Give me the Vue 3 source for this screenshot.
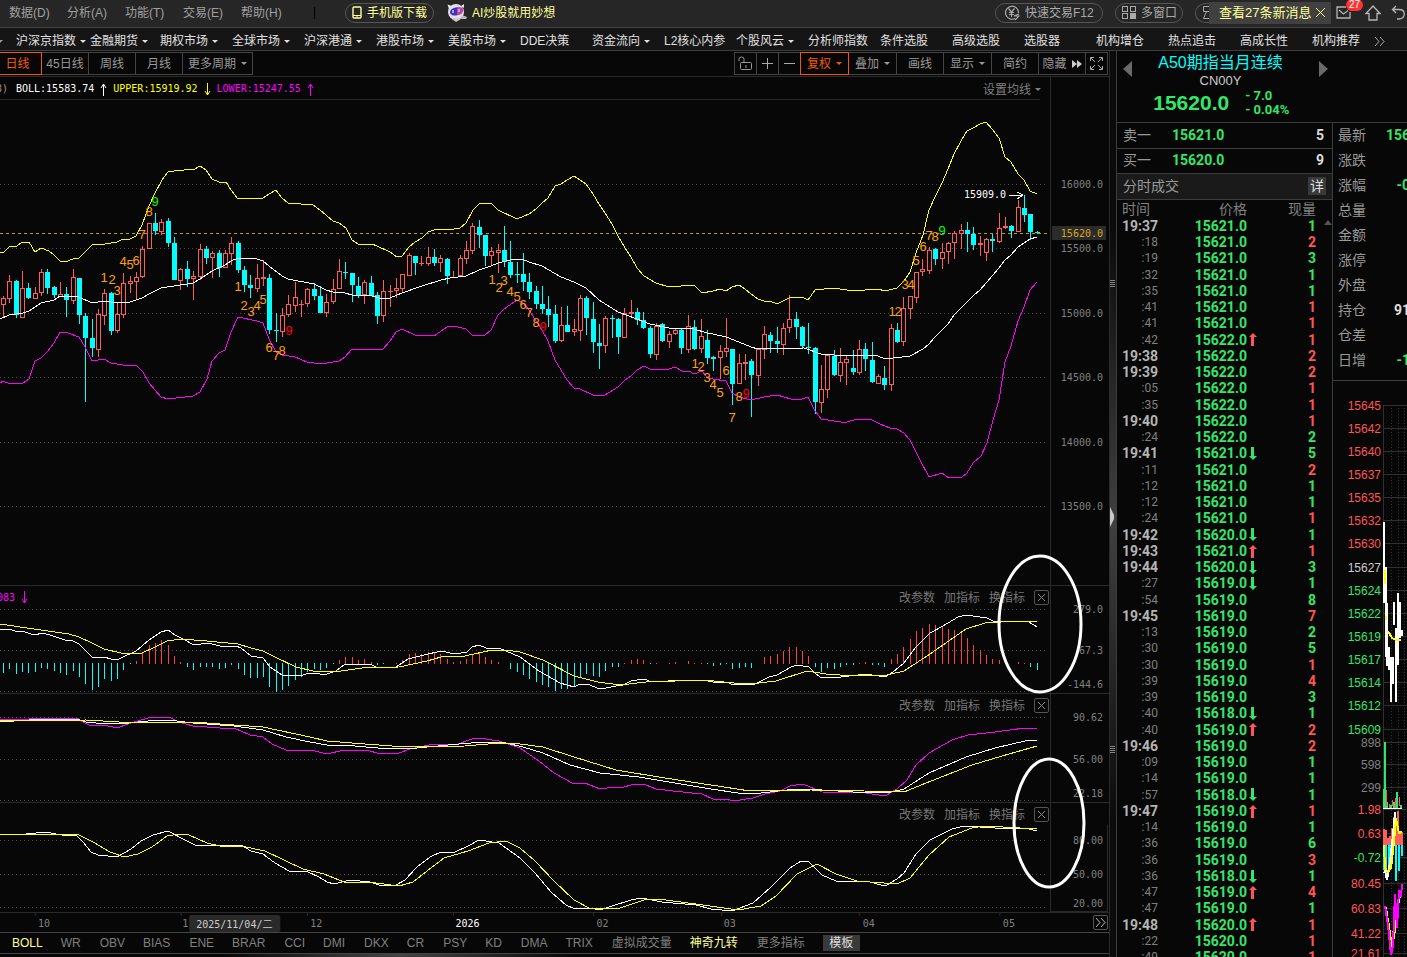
<template>
  <div class="app">
    <header class="menubar">
      <nav class="menus">
        <button v-for="m in menus" :key="m" type="button">{{ m }}</button>
      </nav>
      <span class="menu-sep"></span>
      <button type="button" class="pill pill-phone">
        <svg width="10" height="13" viewBox="0 0 10 13" fill="none" stroke="#ffff99">
          <rect x="1" y="1" width="8" height="11" rx="1" stroke-width="1.4" />
          <path d="M1 9.5h8" /><path d="M4 11h2" />
        </svg>
        手机版下载
      </button>
      <button type="button" class="ai">
        <svg width="22" height="20" viewBox="0 0 22 20">
          <path d="M3 6L1.500 1.500 6 3zM15 3l3-2v4z" fill="#e8e4f4" />
          <circle cx="10" cy="9" r="8" fill="#e4dfee" />
          <ellipse cx="10.500" cy="8.500" rx="6.500" ry="4" fill="#4630b4" transform="rotate(-12 10 9)" />
          <path d="M11 5c4-2 7 0 6 3s-3 4-6 4z" fill="#c0409c" />
          <path d="M7 7v3M13 6v3" stroke="#9fd0ff" stroke-width="1.500" />
          <path d="M6 16l4 3 5-3-1-1H7z" fill="#cfc9c2" />
          <path d="M16 12l5 2-1 2-5 0z" fill="#bdb9c4" />
        </svg>
        AI炒股就用妙想
      </button>
      <span class="grow"></span>
      <button type="button" class="pill pill-trade">
        <svg width="16" height="16" viewBox="0 0 16 16" fill="none" stroke="#aaa" stroke-width="1.200">
          <path d="M11 13.500A6.500 6.500 0 1 1 14.500 8" />
          <path d="M4.500 3.500L7.500 7l3-3.500M7.500 7v5M5 7.500h5M5 9.500h5" />
          <path d="M15 9l-5 2h5l-4 4" />
        </svg>
        快速交易F12
      </button>
      <button type="button" class="pill pill-win">
        <svg width="14" height="13" viewBox="0 0 14 13" fill="none" stroke="#aaa">
          <rect x=".5" y=".5" width="5" height="5" /><rect x="8.500" y=".5" width="5" height="5" />
          <rect x=".5" y="7.500" width="5" height="5" /><rect x="8.500" y="7.500" width="5" height="5" fill="#aaa" />
        </svg>
        多窗口
      </button>
      <button type="button" class="pill pill-cut" aria-label="layout">
        <svg width="7" height="13" viewBox="0 0 7 13" fill="none" stroke="#aaa">
          <path d="M7 .5H1.500v5H7M4.500 5.500L1.500 12.500H7" />
        </svg>
      </button>
      <div class="notice">
        <span>查看27条新消息</span>
        <button type="button" aria-label="close">
          <svg width="11" height="11" viewBox="0 0 11 11" stroke="#ffff99" fill="none"><path d="M1 1l9 9M10 1l-9 9" /></svg>
        </button>
      </div>
      <button type="button" class="tool mail" aria-label="mail">
        <svg width="15" height="13" viewBox="0 0 15 13" fill="none" stroke="#b4b4b4" stroke-width="1.300">
          <path d="M10 1H1v11h13V6" /><path d="M3 4l4.500 4L12 4.500" />
        </svg>
        <span class="badge">27</span>
      </button>
      <button type="button" class="tool" aria-label="home">
        <svg width="16" height="16" viewBox="0 0 16 16" fill="none" stroke="#b4b4b4" stroke-width="1.300">
          <path d="M1 8.500L8 1l7 7.500h-3V15H4V8.500z" />
        </svg>
      </button>
      <button type="button" class="tool undo" aria-label="back">
        <svg width="14" height="15" viewBox="0 0 14 15" fill="none" stroke="#b4b4b4" stroke-width="1.300">
          <path d="M5 1L1.500 4.500 5 8M1.500 4.500H8c7 0 7 8.500 0 9.500H6" />
        </svg>
      </button>
    </header>

    <nav class="navbar">
      <i class="caret"></i>
      <a v-for="n in navs" :key="n.t" href="#">{{ n.t }}<i v-if="n.d" class="caret"></i></a>
      <svg width="12" height="9" viewBox="0 0 12 9" fill="none" stroke="#aaa"><path d="M1 0l4 4.500L1 9M6 0l4 4.500L6 9" /></svg>
    </nav>

    <main class="work">
      <section class="charts">
        <div class="toolbar">
          <button type="button" class="on p41">日线</button>
          <button type="button" class="p48">45日线</button>
          <button type="button" class="p48">周线</button>
          <button type="button" class="p48">月线</button>
          <button type="button" class="p71">更多周期<i class="caret"></i></button>
          <span class="grow"></span>
          <button type="button" class="p23" aria-label="lock">
            <svg width="15" height="15" viewBox="0 0 15 15" fill="none" stroke="#999">
              <path d="M1 5V3q0-2 2.500-2T6 3v3" /><rect x="2.500" y="6.500" width="11" height="7" rx="1" /><path d="M8 9v3" />
            </svg>
          </button>
          <button type="button" class="p23" aria-label="zoom in">
            <svg width="11" height="11" viewBox="0 0 11 11" stroke="#aaa"><path d="M0 5.500h11M5.500 0v11" /></svg>
          </button>
          <button type="button" class="p23" aria-label="zoom out">
            <svg width="11" height="11" viewBox="0 0 11 11" stroke="#aaa"><path d="M0 5.500h11" /></svg>
          </button>
          <button type="button" class="on p49">复权<i class="caret"></i></button>
          <button type="button" class="p49">叠加<i class="caret"></i></button>
          <button type="button" class="p48">画线</button>
          <button type="button" class="p49">显示<i class="caret"></i></button>
          <button type="button" class="p48">简约</button>
          <button type="button" class="p48">隐藏
            <svg width="10" height="8" viewBox="0 0 10 8" fill="#ccc"><path d="M0 0l5 4-5 4zM5 0l5 4-5 4z" /></svg>
          </button>
          <button type="button" class="p23" aria-label="fullscreen">
            <svg width="13" height="13" viewBox="0 0 13 13" fill="none" stroke="#aaa">
              <path d="M.5 4V.5H4M9 .5h3.500V4M12.500 9v3.500H9M4 12.500H.5V9M1 1l4 4M12 1L8 5M12 12L8 8M1 12l4-4" />
            </svg>
          </button>
        </div>

        <div class="legend">
          <span class="dim">3)</span>
          <span class="w">BOLL:15583.74</span><svg class="arr" viewBox="0 0 7 13"><path d="M3.500 13V1M1 5l2.500-4L6 5" stroke="#fff" /></svg>
          <span class="y">UPPER:15919.92</span><svg class="arr" viewBox="0 0 7 13"><path d="M3.500 0v12M1 8l2.500 4L6 8" stroke="#ff0" /></svg>
          <span class="m">LOWER:15247.55</span><svg class="arr" viewBox="0 0 7 13"><path d="M3.500 13V1M1 5l2.500-4L6 5" stroke="#f0f" /></svg>
          <span class="grow"></span>
          <button type="button">设置均线<i class="caret"></i></button>
          <span class="legend-end"></span>
        </div>

        <svg class="plot" viewBox="0 99 1109 486">
          <path class="frame" d="M0 99H1040M1050 99V585" />
          <path v-for="t in priceTicks" :key="t.y" class="grid" :d="`M0 ${t.y}H1048`" />
          <path class="last" d="M0 233H1048" />
          <g v-for="(c, i) in candles" :key="i" :fill="c[0] ? '#ff5c5c' : '#00ffff'">
            <rect :x="cx(i)" :y="c[1]" width="1" :height="Math.max(1, c[4] - c[1])" />
            <rect :x="cx(i) - 2" :y="c[2]" width="5" :height="Math.max(1, c[3] - c[2])" />
            <rect v-if="c[0] && c[3] - c[2] > 2" :x="cx(i) - 1" :y="c[2] + 1" width="3" :height="c[3] - c[2] - 2" fill="#070707" />
          </g>
          <polyline class="line y" :points="boll.upper" />
          <polyline class="line w" :points="boll.mid" />
          <polyline class="line m" :points="boll.lower" />
          <text v-for="(n, i) in nines" :key="'n' + i" class="nine" :class="n[3]" :x="n[1]" :y="n[2] + 5">{{ n[0] }}</text>
          <text class="peak" x="964" y="198">15909.0</text>
          <path class="peak-arrow" d="M1009 195H1023M1017 192L1023 195L1017 199" />
          <rect x="1052" y="226" width="54" height="14" fill="#2b2b2b" />
          <text v-for="t in priceTicks" :key="t.v" class="axis" x="1103" :y="t.y + 4">{{ t.v }}</text>
          <text class="axis now" x="1103" y="237">15620.0</text>
        </svg>

        <div v-for="p in panels" :key="p.id" class="panel">
          <div class="panel-head">
            <span v-if="p.note" class="note">{{ p.note }}<svg class="arr" viewBox="0 0 7 13"><path d="M3.500 0v12M1 8l2.500 4L6 8" stroke="#f0f" /></svg></span>
            <span class="grow"></span>
            <button type="button">改参数</button>
            <button type="button">加指标</button>
            <button type="button">换指标</button>
            <button type="button" class="box" aria-label="close">
              <svg width="9" height="9" viewBox="0 0 9 9" stroke="#888"><path d="M1 1l7 7M8 1L1 8" /></svg>
            </button>
          </div>
          <svg class="plot" :viewBox="p.box">
            <path class="frame" :d="p.frame" />
            <path v-for="g in p.grid" :key="g" class="grid" :d="`M0 ${g}H1048`" />
            <template v-if="p.bars">
              <rect v-for="(b, i) in p.bars" :key="i" :x="cx(i)" :y="b > 0 ? 664 - b : 663" width="1" :height="Math.abs(b)" :fill="b > 0 ? '#ff4040' : '#00ffff'" />
            </template>
            <polyline v-for="l in p.lines" :key="l[0]" class="line" :class="l[0]" :points="l[1]" />
            <text v-for="t in p.ticks" :key="t[0]" class="axis" x="1103" :y="t[1] + 4">{{ t[0] }}</text>
          </svg>
        </div>

        <div class="dates">
          <svg viewBox="0 913 1092 19">
            <path v-for="x in [35, 181, 307, 453, 593, 721, 859, 999]" :key="x" class="frame" :d="`M${x} 913v3`" />
            <text v-for="d in dates" :key="d[0] + d[1]" :class="{ year: d[0] === '2026' }" :x="d[1]" y="927">{{ d[0] }}</text>
            <rect x="189" y="915" width="91" height="17" rx="2" fill="#2a2a2a" />
            <text class="cursor-date" x="196" y="928">2025/11/04/二</text>
          </svg>
          <button type="button" class="box" aria-label="more">
            <svg width="11" height="11" viewBox="0 0 11 11" fill="none" stroke="#bbb"><path d="M1 1l4 4.500L1 10M6 1l4 4.500L6 10" /></svg>
          </button>
        </div>

        <div class="tabs">
          <button v-for="t in tabs" :key="t" type="button" :class="{ hot: t === 'BOLL' || t === '神奇九转', tpl: t === '模板' }">{{ t }}</button>
        </div>
        <div class="foot"></div>

        <svg class="marks" viewBox="0 51 1109 906">
          <ellipse cx="1040" cy="624" rx="41" ry="68" />
          <ellipse cx="1049" cy="823" rx="35" ry="64" />
        </svg>
      </section>

      <div class="splitter">
        <i class="grip"></i>
        <svg width="5" height="20" viewBox="0 0 5 20" fill="#c8c8c8"><path d="M0 0l4 8v4l-4 8z" /></svg>
        <i class="grip"></i>
      </div>

      <aside class="quote">
        <div class="head">
          <button type="button" aria-label="previous"><svg width="9" height="16" viewBox="0 0 9 16" fill="#6a6a6a"><path d="M9 0v16L0 8z" /></svg></button>
          <div class="head-mid">
            <h1>A50期指当月连续</h1>
            <p class="code">CN00Y</p>
            <div class="price">
              <strong>15620.0</strong>
              <span>- 7.0<br />- 0.04%</span>
            </div>
          </div>
          <button type="button" aria-label="next"><svg width="9" height="16" viewBox="0 0 9 16" fill="#6a6a6a"><path d="M0 0v16l9-8z" /></svg></button>
        </div>
        <div class="cols">
          <div class="ticks">
            <div class="book"><span>卖一</span><b class="g">15621.0</b><b class="vol">5</b></div>
            <div class="book"><span>买一</span><b class="g">15620.0</b><b class="vol">9</b></div>
            <div class="ticks-title"><span>分时成交</span><button type="button">详</button></div>
            <table>
              <thead>
                <tr><th>时间</th><th>价格</th><th></th><th>现量</th></tr>
              </thead>
              <tbody>
                <tr v-for="(r, i) in trades" :key="i">
                  <td :class="r[0][0] === ':' ? 'sec' : 'min'">{{ r[0] }}</td>
                  <td class="g">{{ r[1] }}.0</td>
                  <td class="dir">
                    <svg v-if="r[2]" width="8" height="13" viewBox="0 0 8 13" :fill="r[2] === 'u' ? '#ff5555' : '#33e668'">
                      <path :d="r[2] === 'u' ? 'M4 0L8 4H5V13H2V4H0z' : 'M4 13L8 9H5V0H2V9H0z'" />
                    </svg>
                  </td>
                  <td :class="r[4]">{{ r[3] }}</td>
                </tr>
              </tbody>
            </table>
            <i class="scroll-up"></i>
          </div>
          <div class="info">
            <dl>
              <div v-for="f in facts" :key="f[0]"><dt>{{ f[0] }}</dt><dd :class="f[2]">{{ f[1] }}</dd></div>
            </dl>
            <svg class="mini" viewBox="1333 381 74 576">
              <path class="mini-grid" :d="miniGrid" />
              <path class="mini-dots" d="M1391 405V957M1398 405V957M1404 405V957" />
              <path class="mini-w" d="M1384 522V603M1386 567V657M1387 603V666M1389 647V670M1391 657V702M1393 657V684M1394 602V625M1396 628V702M1398 593V665M1400 602V638M1402 630V636" />
              <path class="mini-y" d="M1385 570V584M1386 616V620M1388 631L1392 638L1396 640H1401" />
              <path class="mini-g" d="M1384 789V808M1385 742V808M1387 802V808M1391 805V808M1394 802V808M1397 792V808M1401 805V808" />
              <path class="mini-r" d="M1386 790V806M1389 804V808M1392 800V806M1395 798V808M1399 797V806" />
              <path class="mini-base" d="M1383 808H1402" />
              <path class="mini-bar-r" d="M1384 829V845M1386 830V845M1388 838V845M1390 836V845M1392 828V845M1394 817V845M1396 823V845M1398 811V845M1400 832V845M1402 832V845" />
              <path class="mini-bar-c" d="M1384 845V870M1386 845V873M1389 845V865M1391 845V858M1396 845V881M1399 845V871M1402 845V856" />
              <polyline class="mini-w" points="1384,873 1385,871 1387,880 1390,862 1393,835 1395,812" />
              <polyline class="mini-y" points="1384,845 1385,868 1388,872 1391,868 1394,842 1396,818 1399,833 1402,832" />
              <polyline class="mini-w" points="1386,907 1389,930 1392,950 1395,912 1398,905 1401,890" />
              <polyline class="mini-y" points="1386,910 1389,926 1392,948 1395,930 1398,900 1401,894" />
              <polyline class="mini-m" points="1385,906 1388,925 1391,955 1393,945 1395,894 1397,928 1399,890 1401,897 1402,884" />
              <text v-for="t in miniTicks" :key="t[0]" :class="t[2]" x="1381" :y="t[1] + 5">{{ t[0] }}</text>
            </svg>
          </div>
        </div>
      </aside>
    </main>
  </div>
</template>

<script setup>
const menus = ['数据(D)', '分析(A)', '功能(T)', '交易(E)', '帮助(H)']

const navs = [
  { t: '沪深京指数', d: 1 }, { t: '金融期货', d: 1 }, { t: '期权市场', d: 1 }, { t: '全球市场', d: 1 },
  { t: '沪深港通', d: 1 }, { t: '港股市场', d: 1 }, { t: '美股市场', d: 1 }, { t: 'DDE决策' },
  { t: '资金流向', d: 1 }, { t: 'L2核心内参' }, { t: '个股风云', d: 1 }, { t: '分析师指数' },
  { t: '条件选股' }, { t: '高级选股' }, { t: '选股器' }, { t: '机构增仓' },
  { t: '热点追击' }, { t: '高成长性' }, { t: '机构推荐' }
]

const tabs = ['BOLL', 'WR', 'OBV', 'BIAS', 'ENE', 'BRAR', 'CCI', 'DMI', 'DKX', 'CR', 'PSY', 'KD', 'DMA', 'TRIX', '虚拟成交量', '神奇九转', '更多指标', '模板']

const dates = [['10', 38], ['1', 182], ['12', 310], ['2026', 455], ['02', 596], ['03', 723], ['04', 862], ['05', 1002]]

const priceTicks = [
  { v: '16000.0', y: 184 }, { v: '15500.0', y: 248 }, { v: '15000.0', y: 313 },
  { v: '14500.0', y: 377 }, { v: '14000.0', y: 442 }, { v: '13500.0', y: 506 }
]

// centre column of candle i
const cx = (i) => Math.floor(3.4 + 6.342 * i)

// up?, high, body top, body bottom, low
const candles = [
  [1, 296, 298, 305, 318], [1, 275, 281, 299, 303], [0, 280, 281, 315, 318], [1, 271, 288, 318, 318], [0, 283, 288, 298, 299],
  [1, 287, 293, 299, 299], [1, 269, 272, 293, 296], [0, 269, 272, 288, 294], [0, 286, 287, 295, 298], [1, 282, 294, 297, 297],
  [0, 287, 294, 300, 317], [1, 269, 277, 301, 304], [0, 278, 278, 315, 324], [0, 313, 316, 338, 402], [0, 319, 338, 348, 357],
  [1, 309, 314, 350, 357], [1, 289, 293, 316, 325], [0, 292, 293, 331, 335], [1, 303, 314, 331, 333], [1, 273, 283, 315, 318],
  [1, 276, 281, 284, 293], [1, 272, 277, 282, 299], [1, 246, 249, 277, 278], [1, 223, 223, 249, 249], [0, 213, 223, 231, 235],
  [1, 219, 222, 232, 235], [0, 218, 221, 243, 247], [0, 237, 243, 280, 280], [1, 268, 269, 281, 290], [0, 261, 269, 279, 287],
  [1, 271, 276, 279, 300], [1, 244, 249, 277, 280], [0, 246, 249, 258, 264], [1, 251, 253, 258, 278], [0, 250, 253, 268, 277],
  [1, 250, 253, 268, 268], [1, 237, 243, 254, 265], [0, 241, 243, 270, 273], [0, 266, 270, 285, 292], [0, 275, 285, 288, 298],
  [1, 264, 278, 289, 292], [1, 260, 277, 279, 286], [0, 274, 278, 330, 334], [0, 313, 330, 331, 342], [1, 308, 315, 332, 337],
  [1, 295, 304, 315, 317], [1, 282, 297, 306, 312], [1, 300, 304, 305, 317], [1, 288, 289, 304, 307], [0, 283, 289, 296, 300],
  [0, 286, 296, 313, 313], [1, 294, 302, 313, 317], [1, 279, 289, 302, 304], [1, 259, 271, 289, 289], [0, 262, 272, 273, 279],
  [0, 273, 273, 285, 302], [0, 277, 286, 295, 298], [1, 280, 282, 295, 304], [0, 276, 283, 296, 296], [0, 292, 295, 316, 324],
  [1, 280, 291, 316, 322], [1, 285, 291, 292, 307], [1, 278, 288, 291, 298], [1, 274, 274, 289, 292], [1, 253, 255, 276, 276],
  [0, 256, 256, 263, 275], [1, 256, 263, 264, 266], [1, 247, 257, 264, 266], [0, 249, 257, 263, 266], [1, 255, 258, 263, 272],
  [0, 258, 259, 276, 284], [1, 271, 277, 278, 278], [1, 255, 258, 276, 277], [1, 241, 250, 259, 264], [1, 223, 226, 251, 254],
  [0, 220, 227, 235, 248], [0, 235, 235, 256, 266], [1, 247, 251, 256, 266], [1, 244, 250, 253, 273], [0, 226, 250, 262, 267],
  [0, 241, 262, 275, 278], [0, 262, 274, 275, 283], [0, 253, 274, 282, 291], [0, 273, 282, 292, 299], [0, 286, 291, 304, 309],
  [0, 286, 304, 309, 314], [0, 296, 309, 315, 327], [0, 305, 314, 341, 343], [1, 307, 325, 341, 342], [0, 306, 325, 332, 332],
  [1, 319, 329, 332, 336], [1, 295, 298, 331, 341], [0, 296, 298, 318, 335], [0, 302, 319, 342, 353], [0, 324, 343, 346, 369],
  [1, 316, 318, 346, 353], [0, 315, 318, 319, 338], [0, 318, 319, 337, 354], [1, 308, 313, 338, 338], [1, 300, 312, 314, 317],
  [0, 308, 312, 320, 325], [0, 312, 320, 328, 329], [0, 326, 328, 354, 358], [1, 323, 326, 355, 360], [0, 323, 324, 341, 342],
  [1, 331, 334, 342, 348], [1, 328, 330, 334, 335], [0, 329, 330, 348, 354], [1, 315, 326, 350, 353], [0, 320, 327, 349, 350],
  [1, 319, 336, 349, 353], [0, 330, 340, 358, 364], [0, 356, 357, 359, 371], [1, 345, 351, 358, 379], [1, 318, 348, 352, 357],
  [0, 349, 349, 384, 405], [1, 354, 363, 384, 384], [1, 354, 362, 364, 380], [0, 359, 361, 375, 417], [1, 349, 349, 376, 386],
  [1, 326, 334, 350, 359], [0, 332, 335, 341, 353], [0, 327, 341, 344, 353], [1, 323, 328, 345, 355], [1, 295, 319, 328, 333],
  [0, 312, 319, 327, 339], [0, 326, 327, 346, 348], [0, 323, 347, 348, 354], [0, 347, 348, 402, 414], [1, 365, 389, 403, 413],
  [1, 355, 355, 390, 398], [0, 350, 356, 375, 376], [1, 348, 362, 376, 382], [1, 356, 359, 363, 385], [0, 350, 368, 372, 375],
  [1, 340, 349, 373, 375], [0, 343, 349, 359, 371], [0, 342, 360, 382, 383], [1, 374, 376, 384, 384], [0, 366, 378, 385, 390],
  [1, 324, 328, 385, 391], [0, 323, 330, 342, 343], [1, 297, 308, 342, 346], [1, 296, 296, 309, 319], [1, 272, 272, 298, 303],
  [1, 259, 269, 272, 276], [1, 247, 250, 271, 274], [0, 248, 249, 259, 265], [1, 243, 252, 259, 269], [1, 242, 243, 252, 264],
  [1, 231, 233, 243, 259], [1, 224, 230, 234, 249], [0, 222, 230, 234, 252], [0, 227, 234, 245, 250], [1, 236, 243, 245, 256],
  [1, 238, 239, 253, 261], [0, 234, 239, 241, 252], [1, 213, 228, 242, 243], [1, 217, 226, 228, 229], [0, 225, 226, 231, 238],
  [1, 200, 207, 232, 232], [0, 195, 208, 215, 222], [0, 214, 214, 232, 240], [0, 231, 232, 233, 234]
]

const boll = {
  upper: '0,253 4,252 9,247 17,246 22,242 29,242 35,252 41,248 49,251 54,255 60,261 65,262 73,259 79,258 92,245 105,244 111,243 117,242 123,239 130,239 136,236 142,225 149,206 155,193 162,180 168,172 174,171 195,169 200,166 206,170 212,179 219,182 226,182 231,190 238,199 263,198 269,194 276,190 282,198 288,203 313,205 320,210 333,221 339,223 346,228 352,240 358,244 372,244 377,246 390,252 397,257 402,256 409,247 415,242 422,238 428,232 434,230 441,229 447,230 454,229 460,228 466,223 473,210 479,204 485,203 491,203 498,210 517,219 529,214 536,209 542,203 548,198 555,186 561,184 567,180 574,176 580,180 586,184 593,194 599,204 605,213 612,224 618,236 625,248 631,257 637,268 644,276 656,283 669,287 694,285 702,293 713,291 720,289 726,291 732,287 739,285 745,289 751,294 758,299 764,301 770,301 777,304 789,298 802,297 808,300 815,290 834,288 853,291 878,289 885,291 897,288 904,281 910,272 916,253 923,235 929,210 935,197 942,183 948,169 954,154 961,141 967,131 973,128 980,124 986,122 992,129 999,138 1005,157 1011,162 1018,174 1024,180 1030,191 1037,194',
  mid: '0,319 9,315 23,313 29,311 35,307 41,303 54,300 60,296 79,297 92,303 105,301 117,303 130,302 142,298 149,294 161,288 174,286 193,283 200,279 212,271 225,265 231,261 238,258 257,259 263,261 269,266 282,276 288,279 314,284 326,290 333,292 345,293 352,295 372,296 383,299 390,298 402,293 422,286 441,280 450,278 466,276 479,270 491,266 498,263 510,260 522,259 529,262 542,266 561,277 574,282 586,288 599,300 618,312 637,319 650,324 669,328 694,329 707,333 713,334 726,337 739,342 751,347 758,349 804,348 821,354 847,356 867,355 878,356 885,359 910,356 923,349 929,344 935,337 948,324 954,315 973,296 980,290 999,268 1005,260 1011,255 1018,247 1030,239 1037,237',
  lower: '0,383 3,381 10,384 23,383 29,379 35,361 41,358 48,351 54,343 60,332 68,333 79,337 85,347 92,361 104,359 111,363 123,365 136,365 143,372 149,383 161,397 168,399 193,396 200,392 207,379 212,361 219,353 225,350 231,332 238,317 257,321 263,323 269,339 276,352 282,355 295,357 307,362 321,364 339,361 345,357 352,349 372,349 377,350 383,349 390,341 396,332 402,329 415,335 434,336 447,327 454,326 466,329 472,335 485,335 491,330 498,315 504,309 517,300 523,303 529,310 542,330 548,341 555,360 567,380 574,388 580,389 593,395 599,396 605,395 618,387 625,380 631,376 637,370 644,366 650,369 669,369 675,367 682,371 689,371 694,374 702,371 707,377 713,379 726,381 732,393 739,397 751,400 764,397 777,395 791,399 802,399 808,397 815,411 821,419 841,422 847,422 857,419 872,420 880,424 890,428 897,429 904,433 910,440 920,460 929,477 942,473 949,478 962,477 967,473 973,463 981,456 987,443 993,420 999,400 1005,362 1011,346 1018,321 1024,307 1030,290 1037,282'
}

// nine-turn counters: digit, x, y, colour
const nines = [
  ['1', 104, 277], ['2', 112, 279], ['3', 117, 290], ['4', 123, 261], ['5', 130, 264], ['6', 136, 260], ['7', 142, 234], ['8', 149, 211], ['9', 155, 201, 'up'],
  ['1', 238, 286], ['2', 244, 305], ['3', 251, 311], ['4', 257, 305], ['5', 263, 299], ['6', 269, 347], ['7', 276, 355], ['8', 282, 350], ['9', 289, 330, 'down'],
  ['1', 492, 279], ['2', 499, 287], ['3', 504, 280], ['4', 510, 291], ['5', 517, 296], ['6', 523, 304], ['7', 529, 312], ['8', 536, 322], ['9', 543, 326, 'down'],
  ['1', 695, 363], ['2', 701, 366], ['3', 707, 377], ['4', 713, 384], ['5', 720, 392], ['6', 726, 370], ['7', 732, 417], ['8', 739, 396], ['9', 746, 393, 'down'],
  ['1', 892, 311], ['2', 898, 311], ['3', 905, 284], ['4', 911, 284], ['5', 916, 260], ['6', 923, 246], ['7', 929, 235], ['8', 935, 236], ['9', 942, 230, 'up']
]

const macd = [
  -10, -6, -11, -9, -10, -9, -5, -6, -8, -10, -12, -8, -14, -21, -27, -24, -16, -18, -16, -7, -1, 3, 11, 19, 21, 24, 19, 8, 2, -4,
  -7, -4, -4, -4, -6, -5, -2, -6, -12, -15, -15, -14, -24, -29, -27, -23, -17, -14, -9, -6, -7, -5, -1, 4, 7, 7, 4, 5, 2, -2,
  -1, 0, 1, 4, 10, 11, 10, 12, 11, 10, 5, 2, 3, 5, 10, 11, 7, 4, 2, 0, -6, -9, -12, -16, -19, -22, -24, -28, -26, -26,
  -23, -15, -11, -13, -14, -8, -4, -4, 1, 4, 5, 4, -1, 1, 0, 1, 2, 0, 3, 1, 1, -1, -3, -2, -1, -6, -5, -4, -5, 0,
  7, 8, 10, 13, 17, 17, 13, 8, -4, -9, -5, -6, -4, -2, -2, 1, 2, -2, -2, -4, 5, 10, 17, 25, 33, 36, 40, 39, 37, 35,
  34, 31, 26, 19, 14, 9, 5, 4, 0, 0, 2, 1, -4, -7
]

const panels = [
  {
    id: 'macd',
    note: '083',
    box: '0 608 1109 85',
    frame: 'M1050 608V693',
    grid: [609, 650, 691],
    bars: macd,
    lines: [
      ['w', '0,629 9,629 15,631 22,631 34,635 43,633 53,636 65,640 73,641 79,644 92,657 98,658 104,657 111,659 117,660 123,657 136,651 149,640 161,632 168,630 175,635 183,639 194,645 208,643 220,646 236,646 241,648 251,656 263,658 270,667 282,675 301,676 308,673 320,674 327,674 336,671 344,665 370,664 378,668 382,667 396,667 408,659 424,655 441,651 455,654 467,652 472,647 479,645 486,648 499,648 520,657 539,671 560,683 574,687 580,684 587,684 600,689 606,688 616,686 623,685 631,681 644,679 652,682 685,680 704,680 713,682 727,682 733,685 755,684 769,677 777,675 791,667 797,665 809,667 815,673 820,677 841,677 866,674 885,677 893,672 904,663 916,647 930,633 943,626 958,617 966,615 987,618 993,621 1012,622 1019,621 1029,622 1037,627'],
      ['y', '0,624 34,629 69,634 79,637 92,643 104,649 121,653 142,653 155,647 167,641 181,639 207,641 238,644 251,648 263,651 275,657 296,667 313,671 341,671 362,668 399,667 427,661 441,657 465,656 492,650 513,651 520,652 543,660 574,676 598,682 620,685 646,682 704,680 734,683 759,683 776,681 807,671 826,674 853,676 887,675 904,671 930,654 966,629 985,623 1018,621 1037,622']
    ],
    ticks: [['279.0', 609], ['67.3', 650], ['-144.6', 684]]
  },
  {
    id: 'wide',
    box: '0 716 1109 86',
    frame: 'M1050 716V802',
    grid: [717, 759, 800],
    lines: [
      ['m', '0,720 7,719 17,720 41,718 65,719 77,718 83,722 91,726 104,725 117,728 131,723 148,718 169,717 179,722 193,726 220,728 234,728 250,735 263,737 272,744 286,750 315,751 327,754 344,750 370,751 377,753 399,753 410,749 434,744 458,744 472,739 479,738 499,741 520,748 539,761 554,773 574,784 585,783 600,789 614,787 620,788 635,784 646,785 656,789 673,791 702,794 713,799 727,799 733,801 753,798 765,794 780,791 790,786 803,784 822,792 866,793 885,796 897,789 907,780 916,765 929,753 952,740 968,735 995,732 1025,728 1037,728'],
      ['w', '0,722 43,719 77,719 86,722 96,723 119,724 148,721 169,720 193,723 234,726 263,730 286,737 310,742 327,745 355,746 389,749 417,748 448,745 482,742 506,743 523,747 543,753 570,765 600,773 639,777 711,789 738,793 761,793 796,789 822,790 853,792 887,793 904,789 929,773 966,757 995,748 1025,741 1037,740'],
      ['y', '0,721 86,720 119,722 152,722 193,722 234,725 263,727 310,737 327,741 365,744 406,747 465,746 499,743 520,744 543,747 574,757 616,770 665,778 711,785 750,791 811,790 864,791 904,792 926,783 972,765 1002,756 1037,746']
    ],
    ticks: [['90.62', 717], ['56.00', 759], ['22.18', 793]]
  },
  {
    id: 'slow',
    box: '0 825 1109 87',
    frame: 'M1050 825V911H1107V825',
    grid: [840, 874, 907],
    lines: [
      ['w', '0,834 17,835 45,832 62,835 76,835 83,842 91,852 98,855 117,857 131,849 141,841 153,835 168,831 183,839 195,845 220,846 241,845 251,851 263,854 275,863 289,871 308,872 319,877 327,882 334,884 350,880 370,882 382,886 396,885 405,880 417,867 430,857 441,852 455,852 468,846 479,840 499,843 520,858 535,873 551,892 566,905 575,909 591,908 600,910 612,906 631,900 642,898 662,902 696,905 711,909 732,911 753,903 771,887 790,868 801,861 809,862 822,875 836,881 866,881 885,886 897,879 904,873 916,854 930,840 952,829 964,826 995,828 1025,828 1037,831'],
      ['y', '0,834 62,834 79,835 93,842 110,852 124,857 138,854 152,847 167,836 179,834 189,835 207,843 220,846 241,846 265,851 286,861 303,869 324,874 344,882 368,882 399,886 413,882 427,871 444,858 468,851 489,843 506,841 520,848 535,861 554,881 574,900 591,909 620,908 644,900 658,899 696,904 738,910 761,906 776,896 797,874 817,864 836,874 857,881 897,884 910,878 929,855 949,837 972,828 985,826 1037,829']
    ],
    ticks: [['80.00', 840], ['50.00', 874], ['20.00', 903]]
  }
]

// time, price, arrow, volume, side
const trades = [
  ['19:37', 15621, '', 1, 'g'], [':18', 15621, '', 2, 'r'], [':19', 15621, '', 3, 'g'], [':32', 15621, '', 1, 'g'],
  [':35', 15621, '', 1, 'g'], [':41', 15621, '', 1, 'r'], [':41', 15621, '', 1, 'r'], [':42', 15622, 'u', 1, 'r'],
  ['19:38', 15622, '', 2, 'r'], ['19:39', 15622, '', 2, 'r'], [':05', 15622, '', 1, 'r'], [':35', 15622, '', 1, 'r'],
  ['19:40', 15622, '', 1, 'r'], [':24', 15622, '', 2, 'g'], ['19:41', 15621, 'd', 5, 'g'], [':11', 15621, '', 2, 'r'],
  [':12', 15621, '', 1, 'g'], [':12', 15621, '', 1, 'g'], [':24', 15621, '', 1, 'r'], ['19:42', 15620, 'd', 1, 'g'],
  ['19:43', 15621, 'u', 1, 'r'], ['19:44', 15620, 'd', 3, 'g'], [':27', 15619, 'd', 1, 'g'], [':54', 15619, '', 8, 'g'],
  ['19:45', 15619, '', 7, 'r'], [':13', 15619, '', 2, 'g'], [':30', 15619, '', 5, 'g'], [':30', 15619, '', 1, 'r'],
  [':39', 15619, '', 4, 'r'], [':39', 15619, '', 3, 'g'], [':40', 15618, 'd', 1, 'g'], [':40', 15619, 'u', 2, 'r'],
  ['19:46', 15619, '', 2, 'r'], [':09', 15619, '', 1, 'g'], [':14', 15619, '', 1, 'g'], [':57', 15618, 'd', 1, 'g'],
  ['19:47', 15619, 'u', 1, 'r'], [':14', 15619, '', 1, 'g'], [':36', 15619, '', 6, 'g'], [':36', 15619, '', 3, 'r'],
  [':36', 15618, 'd', 1, 'g'], [':47', 15619, 'u', 4, 'r'], [':47', 15619, '', 1, 'g'], ['19:48', 15620, 'u', 1, 'r'],
  [':22', 15620, '', 1, 'r'], [':49', 15620, '', 1, 'r']
]

const facts = [
  ['最新', '156', 'g'], ['涨跌', '', ''], ['涨幅', '-0', 'g'], ['总量', '', ''], ['金额', '', ''],
  ['涨停', '', ''], ['外盘', '', ''], ['持仓', '91', 'vol'], ['仓差', '', ''], ['日增', '-1', 'g']
]

const miniTicks = [
  ['15645', 405, 'r'], ['15642', 428, 'r'], ['15640', 451, 'r'], ['15637', 474, 'r'], ['15635', 497, 'r'],
  ['15632', 520, 'r'], ['15630', 543, 'r'], ['15627', 567, 'n'], ['15624', 590, 'g'], ['15622', 613, 'g'],
  ['15619', 636, 'g'], ['15617', 659, 'g'], ['15614', 682, 'g'], ['15612', 705, 'g'], ['15609', 729, 'g'],
  ['898', 742, 'd'], ['598', 764, 'd'], ['299', 787, 'd'], ['1.98', 809, 'r'], ['0.63', 833, 'r'],
  ['-0.72', 857, 'g'], ['80.45', 883, 'r'], ['60.83', 908, 'r'], ['41.22', 933, 'r'], ['21.61', 953, 'r']
]
const miniGrid = miniTicks.map((t) => `M1383 ${t[1]}H1407`).join('') + 'M1383 405V957'
</script>

<style>
body {
  background: #070707;
}
</style>

<style scoped>
.app {
  height: 100vh;
  overflow: hidden;
  display: flex;
  flex-direction: column;
  background: #070707;
  color: #999;
  font: 12px/16px "Liberation Sans", "Noto Sans CJK SC", sans-serif;
}

.app * {
  box-sizing: border-box;
}

button {
  margin: 0;
  padding: 0;
  border: 0;
  background: none;
  color: inherit;
  font: inherit;
  white-space: nowrap;
  cursor: pointer;
}

svg {
  display: block;
  flex: none;
}

.grow {
  flex: 1;
}

.caret {
  display: inline-block;
  flex: none;
  border: 3px solid transparent;
  border-top-color: currentColor;
  border-bottom: 0;
}

.g { color: #33e668; }
.r { color: #ff5555; }
.w { color: #fff; }
.y { color: #ff0; }
.m { color: #f0f; }

/* menu bar */
.menubar {
  flex: none;
  height: 28px;
  padding: 0 2px 2px 9px;
  display: flex;
  align-items: center;
  background: #262626;
  border-bottom: 1px solid #444;
}

.menus {
  display: flex;
}

.menus button {
  width: 58px;
  text-align: left;
  color: #a0a0a0;
}

.menu-sep {
  width: 1px;
  height: 12px;
  margin: 0 30px 0 15px;
  background: #000;
}

.pill {
  height: 20px;
  padding: 0 6px;
  display: flex;
  align-items: center;
  gap: 5px;
  border: 1px solid #555;
  border-radius: 10px;
}

.pill-phone {
  width: 89px;
  color: #ffff99;
}

.ai {
  margin-left: 12px;
  display: flex;
  align-items: center;
  gap: 4px;
  color: #ffff99;
}

.pill-trade {
  width: 108px;
  padding: 0 8px;
  margin-right: 12px;
  color: #aaa;
}

.pill-win {
  width: 68px;
  margin-right: 12px;
  color: #aaa;
}

.pill-cut {
  width: 14px;
  padding: 0 0 0 6px;
  border-right: 0;
  border-radius: 10px 0 0 10px;
}

.notice {
  height: 22px;
  width: 122px;
  margin-right: 5px;
  padding: 0 5px 0 10px;
  display: flex;
  align-items: center;
  justify-content: space-between;
  background: #404040;
  color: #ffff99;
  font-size: 13px;
  white-space: nowrap;
}

.tool {
  position: relative;
  margin-right: 14px;
}

.tool.undo {
  margin: 0 0 0 -4px;
}

.badge {
  position: absolute;
  left: 10px;
  top: -7px;
  width: 17px;
  height: 12px;
  border-radius: 6px;
  background: #f33;
  color: #fff;
  font-size: 10px;
  line-height: 12px;
}

/* market links */
.navbar {
  flex: none;
  height: 23px;
  padding-top: 4px;
  display: flex;
  align-items: center;
  background: #151515;
  border-bottom: 1px solid #3c3c3c;
  overflow: hidden;
}

.navbar > .caret {
  margin-right: 13px;
  margin-left: -3px;
}

.navbar a {
  flex: none;
  width: 72px;
  display: flex;
  align-items: center;
  gap: 4px;
  color: #e0e0e0;
  text-decoration: none;
  white-space: nowrap;
}

.navbar a:first-of-type {
  width: 74px;
}

.navbar a:nth-of-type(2) {
  width: 70px;
}

.navbar svg {
  margin-left: -10px;
}

.work {
  flex: 1;
  min-height: 0;
  display: grid;
  grid-template-columns: minmax(0, 1fr) 7px 291px;
}

.charts {
  position: relative;
  border-right: 1px solid #2a2a2a;
  margin-right: -1px;
}

/* period and tool buttons */
.toolbar {
  height: 26px;
  padding: 1px 1px 2px 0;
  display: flex;
  border-bottom: 1px solid #2a2a2a;
}

.toolbar button {
  height: 23px;
  margin-left: -1px;
  display: flex;
  align-items: center;
  justify-content: center;
  gap: 5px;
  border: 1px solid #444;
}

.toolbar .on {
  position: relative;
  border-color: #f25a00;
  color: #f25a00;
}

.p23 { width: 23px; }
.toolbar .p41 { width: 42px; padding-right: 6px; margin-left: 0; border-left: 0; }
.p48 { width: 48px; }
.p49 { width: 49px; }
.p71 { width: 71px; }

.legend {
  height: 22px;
  padding: 2px 58px 0 0;
  display: flex;
  align-items: center;
  font: 10px/16px "DejaVu Sans Mono", monospace;
}

.legend .dim {
  width: 16px;
  margin-left: -4px;
  margin-right: 4px;
}

.legend button {
  display: flex;
  align-items: center;
  gap: 4px;
  color: #808080;
  font: 12px/16px "Noto Sans CJK SC", sans-serif;
}

.legend-end {
  align-self: stretch;
  width: 10px;
  margin-top: -2px;
  border-right: 1px solid #2a2a2a;
}

.arr {
  width: 7px;
  height: 13px;
  margin: 0 6px;
  fill: none;
}

/* plots */
.plot {
  width: 100%;
  height: auto;
  overflow: visible;
}

.plot path,
.plot rect,
.plot polyline {
  shape-rendering: crispEdges;
}

.frame {
  fill: none;
  stroke: #2a2a2a;
}

.grid {
  stroke: #4a4a4a;
  stroke-dasharray: 1 3;
}

.last {
  stroke: #c09a20;
  stroke-dasharray: 3 3;
}

.line {
  fill: none;
  stroke: currentColor;
}

.axis {
  fill: #808080;
  font: 10px "DejaVu Sans Mono", monospace;
  text-anchor: end;
}

.axis.now {
  fill: #d8a818;
}

.nine {
  fill: #ffa200;
  font: 13px "Liberation Sans", sans-serif;
  text-anchor: middle;
}

.nine.up { fill: #0f0; }
.nine.down { fill: #f00; }

.peak {
  fill: #fff;
  font: 10px "DejaVu Sans Mono", monospace;
}

.peak-arrow {
  fill: none;
  stroke: #fff;
}

.panel {
  border-top: 1px solid #2a2a2a;
}

.panel-head {
  height: 22px;
  margin-right: 58px;
  padding: 1px 1px 0 0;
  display: flex;
  align-items: center;
  gap: 9px;
  border-right: 1px solid #2a2a2a;
  color: #777;
}

.note {
  display: flex;
  align-items: center;
  margin-left: -3px;
  color: #f0f;
  font: 10px/16px "DejaVu Sans Mono", monospace;
}

.box {
  width: 15px;
  height: 15px;
  display: flex;
  flex: none;
  align-items: center;
  justify-content: center;
  border: 1px solid #555;
  border-radius: 2px;
}

.dates {
  height: 20px;
  padding-right: 1px;
  display: flex;
  align-items: center;
  border-top: 1px solid #2a2a2a;
}

.dates > svg {
  flex: 1;
  min-width: 0;
}

.dates text {
  fill: #808080;
  font: 10px "DejaVu Sans Mono", "Noto Sans CJK SC", monospace;
}

.dates .year {
  fill: #fff;
}

.dates .cursor-date {
  fill: #ccc;
}

.tabs {
  height: 22px;
  padding-left: 12px;
  display: flex;
  align-items: center;
  gap: 19px;
  border-top: 1px solid #444;
  border-bottom: 1px solid #444;
  color: #808080;
}

.tabs button:nth-child(even) {
  margin-left: -1px;
}

.tabs .hot {
  color: #ffff99;
}

.tabs .tpl {
  width: 37px;
  background: #3a3a3a;
  color: #ddd;
}

.foot {
  height: 3px;
  background: linear-gradient(90deg, #070707 20%, #444 36%, #070707 52%);
}

.marks {
  position: absolute;
  left: 0;
  top: 0;
  width: 100%;
  height: auto;
  pointer-events: none;
  fill: none;
  stroke: #fff;
  stroke-width: 3;
}

.splitter {
  display: flex;
  flex-direction: column;
  align-items: center;
  justify-content: space-between;
  padding: 229px 0 203px;
  background: linear-gradient(#0b0b0b 20%, #404040 52%, #0b0b0b 85%);
}

.grip {
  width: 5px;
  height: 8px;
  background: repeating-linear-gradient(#888 0 1px, #111 1px 2px);
}

/* quote column */
.quote {
  min-width: 0;
  display: flex;
  flex-direction: column;
  border-left: 1px solid #3c3c3c;
  overflow: hidden;
}

.head {
  height: 72px;
  padding: 0 79px 0 6px;
  display: flex;
  justify-content: space-between;
  align-items: flex-start;
  border-bottom: 1px solid #3c3c3c;
}

.head > button {
  margin-top: 10px;
}

.head-mid {
  margin-right: 10px;
  text-align: center;
}

h1 {
  margin: 2px 0 0;
  color: #0ff;
  font-size: 16px;
  font-weight: 400;
  line-height: 20px;
}

.code {
  margin: 0;
  color: #ccc;
  font-size: 13px;
  line-height: 16px;
}

.price {
  height: 28px;
  margin: 0 -20px 0 -5px;
  display: flex;
  align-items: center;
  gap: 16px;
  color: #33e668;
  white-space: nowrap;
}

.price strong {
  font-size: 21px;
}

.price span {
  font: bold 13px/14px Roboto, sans-serif;
  text-align: left;
}

.cols {
  flex: 1;
  min-height: 0;
  display: grid;
  grid-template-columns: 216px minmax(0, 1fr);
}

.ticks {
  position: relative;
  border-right: 1px solid #3c3c3c;
}

.book {
  height: 26px;
  padding: 0 8px 2px 6px;
  display: flex;
  align-items: center;
  border-bottom: 1px solid #3c3c3c;
  font-size: 14px;
}

.book + .book {
  height: 25px;
}

.book span {
  width: 49px;
}

.book b,
dd {
  font: bold 14px/16px Roboto, sans-serif;
}

.vol {
  margin-left: auto;
  color: #ddd;
}

.ticks-title {
  height: 26px;
  padding: 0 6px 2px;
  display: flex;
  align-items: center;
  justify-content: space-between;
  background: #1a1a1a;
  border-bottom: 1px solid #3c3c3c;
  font-size: 14px;
}

.ticks-title button {
  width: 18px;
  height: 18px;
  background: #3a3a3a;
  color: #ddd;
  line-height: 18px;
}

table {
  width: 100%;
  table-layout: fixed;
  border-collapse: collapse;
}

th {
  height: 18px;
  padding: 0;
  color: #808080;
  font-size: 14px;
  font-weight: 400;
  line-height: 18px;
  text-align: right;
  white-space: nowrap;
}

th:nth-child(1) { width: 41px; padding-right: 8px; }
th:nth-child(2) { width: 89px; }
th:nth-child(3) { width: 12px; }
th:last-child,
td:last-child { padding-right: 16px; }

td {
  height: 16px;
  padding: 0;
  font: bold 14px/16px Roboto, sans-serif;
  text-align: right;
}

tbody tr:nth-child(4n) td {
  height: 17px;
}

.min {
  color: #b4b4b4;
}

.sec {
  color: #808080;
  font-size: 12px;
  font-weight: 400;
}

.dir svg {
  margin-left: 2px;
}

.scroll-up {
  position: absolute;
  right: 0;
  top: 97px;
  border: 4px solid transparent;
  border-bottom: 5px solid #555;
  border-top: 0;
}

.info {
  min-width: 0;
  overflow: hidden;
}

dl {
  height: 258px;
  margin: 0;
  border-bottom: 1px solid #3c3c3c;
}

dl div {
  height: 25px;
  padding: 0 0 2px 5px;
  margin-right: -3px;
  display: flex;
  align-items: center;
  justify-content: space-between;
}

dt {
  font-size: 14px;
}

dd {
  margin: 0;
}

.mini {
  width: 100%;
  height: auto;
}

.mini path,
.mini polyline {
  fill: none;
  shape-rendering: crispEdges;
}

.mini text {
  font-size: 12px;
  text-anchor: end;
}

.mini text.r { fill: #ff5555; }
.mini text.g { fill: #33e668; }
.mini text.n { fill: #ccc; }
.mini text.d { fill: #808080; }
.mini-grid { stroke: #303030; }
.mini-dots { stroke: #303030; stroke-dasharray: 1 2; }
.mini-w { stroke: #fff; stroke-width: 2; }
.mini-y { stroke: #ff0; stroke-width: 2; }
.mini-m { stroke: #f0f; stroke-width: 2; }
.mini-g { stroke: #33e668; stroke-width: 2; }
.mini-r { stroke: #ff5555; }
.mini-base { stroke: #fff; }
.mini-bar-r { stroke: #ff5c5c; stroke-width: 2; }
.mini-bar-c { stroke: #0ff; stroke-width: 2; }
</style>
